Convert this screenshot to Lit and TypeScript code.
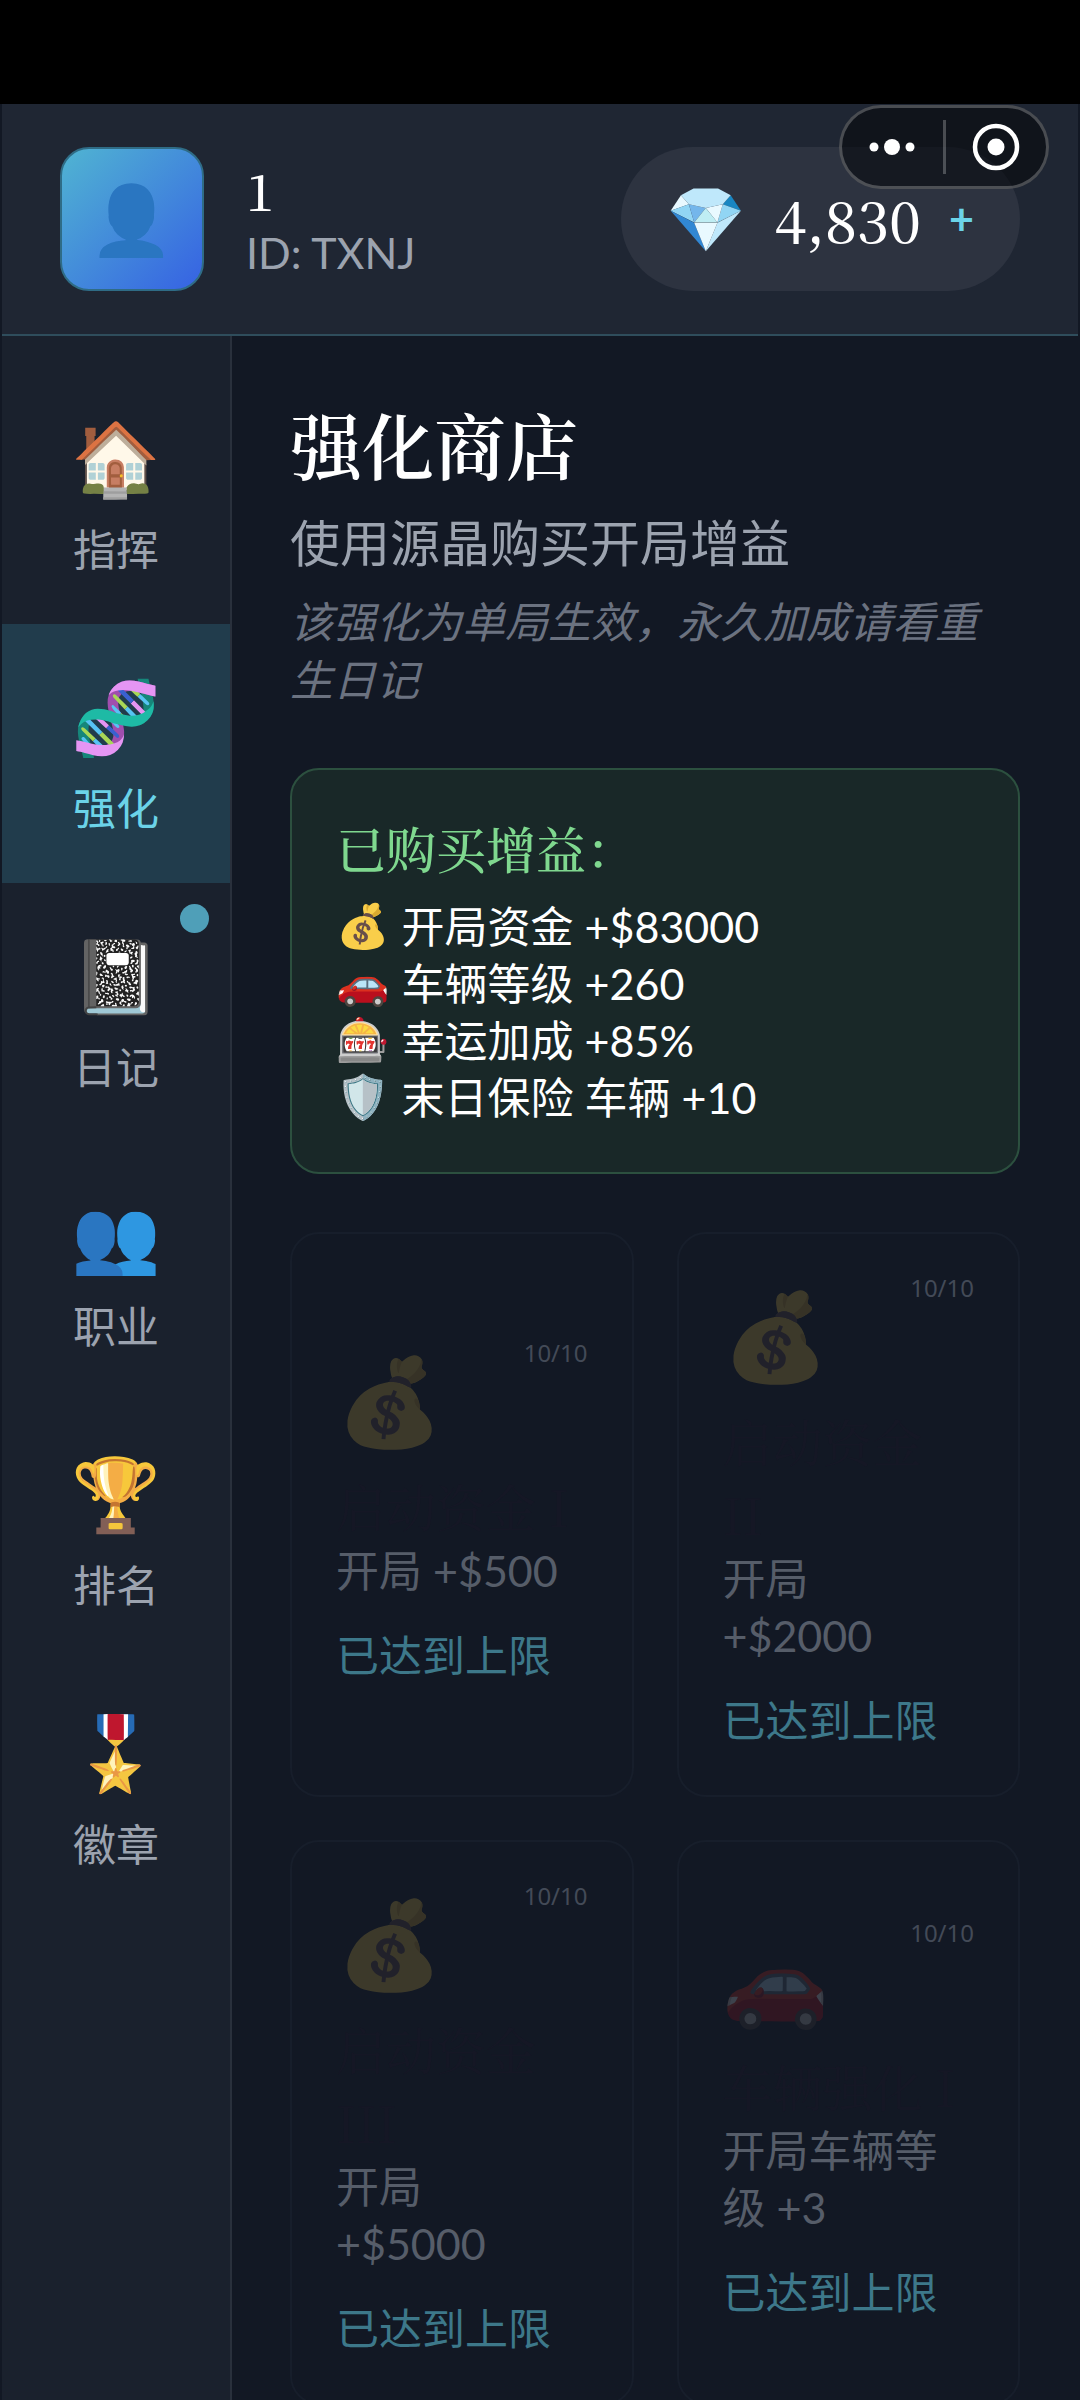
import { LitElement, html, css, nothing } from "lit";
import { customElement, state } from "lit/decorators.js";

interface NavItem {
  id: string;
  icon: string;
  label: string;
  dot?: boolean;
}

interface Upgrade {
  icon: string;
  name: string;
  effect: string;
  count: string;
}

const NAV: NavItem[] = [
  { id: "command", icon: "🏠", label: "指挥" },
  { id: "upgrade", icon: "🧬", label: "强化" },
  { id: "diary", icon: "📓", label: "日记", dot: true },
  { id: "job", icon: "👥", label: "职业" },
  { id: "rank", icon: "🏆", label: "排名" },
  { id: "badge", icon: "🎖️", label: "徽章" },
];

const BUFFS = [
  { icon: "💰", text: "开局资金 +$83000" },
  { icon: "🚗", text: "车辆等级 +260" },
  { icon: "🎰", text: "幸运加成 +85%" },
  { icon: "🛡️", text: "末日保险 车辆 +10" },
];

const UPGRADES: Upgrade[] = [
  { icon: "💰", name: "启动资金 I", effect: "开局 +$500", count: "10/10" },
  { icon: "💰", name: "启动资金 II", effect: "开局 +$2000", count: "10/10" },
  { icon: "💰", name: "启动资金 III", effect: "开局 +$5000", count: "10/10" },
  { icon: "🚗", name: "车辆强化 I", effect: "开局车辆等级 +3", count: "10/10" },
];

@customElement("app-root")
export class AppRoot extends LitElement {
  @state() private active = "upgrade";

  static styles = css`
    :host {
      --sans: Lato, "Noto Sans CJK SC", sans-serif;
      --serif: "Noto Serif CJK SC", "Noto Serif", serif;
      --accent: #6bd3e8;
      display: flex;
      flex-direction: column;
      box-sizing: border-box;
      height: 100vh;
      overflow: hidden;
      background: #121824;
      color: #fff;
      font-family: var(--sans);
      font-size: 43px;
      line-height: 57px;
    }
    * {
      box-sizing: border-box;
    }
    h1, h2, p, ul {
      margin: 0;
      padding: 0;
    }
    button {
      margin: 0;
      padding: 0;
      border: 0;
      background: none;
      color: inherit;
      font: inherit;
      text-align: left;
      cursor: pointer;
    }
    .emoji {
      font-family: "Noto Color Emoji", sans-serif;
      font-style: normal;
      filter: saturate(0.8) brightness(1.02);
    }
    .status-bar {
      flex: none;
      height: 104px;
      background: #000;
    }
    .shell {
      flex: 1;
      min-height: 0;
      display: flex;
      flex-direction: column;
      padding: 0 2px;
    }
    .header {
      position: relative;
      flex: none;
      display: flex;
      align-items: center;
      gap: 42px;
      padding: 43px 58px;
      border-bottom: 2px solid #2f4d5c;
      background: #1f2633;
    }
    .avatar {
      display: flex;
      align-items: center;
      justify-content: center;
      width: 144px;
      height: 144px;
      padding-top: 4px;
      border: 2px solid #2f6c86;
      border-radius: 29px;
      background: linear-gradient(135deg, #50b4d2, #3662e3);
      font-size: 68px;
      line-height: 84px;
    }
    .who {
      flex: 1;
      padding-bottom: 4px;
    }
    .name {
      font-family: var(--serif);
      font-size: 50px;
      font-weight: 500;
      line-height: 70px;
    }
    .uid {
      color: #9ca3af;
    }
    .wallet {
      display: flex;
      align-items: center;
      gap: 28px;
      height: 144px;
      padding: 0 46px;
      border-radius: 72px;
      background: #2d3340;
    }
    .gem {
      padding-top: 4px;
      font-size: 64px;
      line-height: 76px;
    }
    .amount {
      padding-bottom: 2px;
      font-family: var(--serif);
      font-size: 57px;
      font-weight: 500;
      line-height: 84px;
    }
    .plus {
      padding-bottom: 2px;
      color: var(--accent);
      font-weight: 700;
    }
    .capsule {
      position: absolute;
      top: 1px;
      right: 29px;
      display: flex;
      align-items: center;
      width: 210px;
      height: 84px;
      border: 3px solid rgba(255, 255, 255, 0.24);
      border-radius: 42px;
      background: rgba(5, 7, 10, 0.58);
    }
    .capsule button {
      flex: 1;
      display: flex;
      justify-content: center;
    }
    .capsule button + button {
      border-left: 3px solid rgba(255, 255, 255, 0.24);
    }
    .capsule svg {
      display: block;
      width: 54px;
      height: 54px;
    }
    .body {
      flex: 1;
      min-height: 0;
      display: flex;
    }
    .nav {
      flex: none;
      width: 230px;
      padding-top: 29px;
      border-right: 2px solid #29303c;
      background: #1a212d;
    }
    .nav-item {
      position: relative;
      display: flex;
      flex-direction: column;
      align-items: center;
      gap: 14px;
      width: 100%;
      height: 259px;
      padding-top: 48px;
      color: #9ca3af;
    }
    .nav-item.active {
      background: #213c4c;
      color: var(--accent);
    }
    .nav-icon {
      font-size: 72px;
      line-height: 94px;
    }
    .dot {
      position: absolute;
      top: 21px;
      right: 21px;
      width: 29px;
      height: 29px;
      border-radius: 50%;
      background: #4f9fb8;
    }
    .main {
      flex: 1;
      min-width: 0;
      overflow-y: auto;
      scrollbar-width: none;
      padding: 55px 58px;
    }
    .title {
      font-family: var(--serif);
      font-size: 72px;
      font-weight: 600;
      line-height: 104px;
    }
    .subtitle {
      margin-top: 15px;
      color: #9ca3af;
      font-size: 50px;
      line-height: 66px;
    }
    .note {
      margin-top: 17px;
      color: #6b7280;
      font-style: italic;
      line-height: 58px;
    }
    .owned {
      margin-top: 59px;
      padding: 42px 44px 46px;
      border: 2px solid #2c503f;
      border-radius: 29px;
      background: #192828;
    }
    .owned-title {
      margin-bottom: 16px;
      color: #7fd88f;
      font-family: var(--serif);
      font-size: 50px;
      font-weight: 500;
      line-height: 70px;
    }
    .owned ul {
      list-style: none;
    }
    .owned li {
      display: flex;
      gap: 12px;
    }
    .grid {
      display: grid;
      grid-template-columns: 1fr 1fr;
      gap: 43px;
      margin-top: 58px;
    }
    .card {
      display: flex;
      flex-direction: column;
      justify-content: center;
      min-width: 0;
      padding: 46px 44px;
      border: 2px solid #171e2b;
      border-radius: 29px;
    }
    .card-top {
      display: flex;
      justify-content: space-between;
      align-items: flex-start;
      height: 124px;
    }
    .card-icon {
      font-size: 86px;
      line-height: 116px;
      opacity: 0.18;
    }
    .count {
      color: #434a57;
      font-family: "Noto Sans", sans-serif;
      font-size: 24px;
      line-height: 16px;
    }
    .card-name {
      padding-right: 8px;
      color: #151725;
      font-family: var(--serif);
      font-size: 50px;
      line-height: 73px;
    }
    .effect {
      padding-right: 12px;
      color: #565d69;
    }
    .limit {
      margin-top: 28px;
      color: #3d788a;
    }
  `;

  render() {
    return html`
      <div class="status-bar"></div>
      <div class="shell">
        <header class="header">
          <div class="avatar"><span class="emoji">👤</span></div>
          <div class="who">
            <div class="name">1</div>
            <div class="uid">ID: TXNJ</div>
          </div>
          <div class="wallet">
            <span class="gem emoji">💎</span>
            <span class="amount">4,830</span>
            <button class="plus" aria-label="充值">+</button>
          </div>
          <div class="capsule">
            <button aria-label="更多">
              <svg viewBox="0 0 54 54" fill="#fff">
                <circle cx="9" cy="27" r="4.5" />
                <circle cx="27" cy="27" r="8" />
                <circle cx="45" cy="27" r="4.5" />
              </svg>
            </button>
            <button aria-label="关闭">
              <svg viewBox="0 0 54 54">
                <circle cx="27" cy="27" r="21" fill="none" stroke="#fff" stroke-width="4.5" />
                <circle cx="27" cy="27" r="8.5" fill="#fff" />
              </svg>
            </button>
          </div>
        </header>
        <div class="body">
          <nav class="nav">${NAV.map((item) => this.renderNav(item))}</nav>
          <main class="main">
            <h1 class="title">强化商店</h1>
            <p class="subtitle">使用源晶购买开局增益</p>
            <p class="note">该强化为单局生效，永久加成请看重生日记</p>
            <section class="owned">
              <h2 class="owned-title">已购买增益：</h2>
              <ul>
                ${BUFFS.map(
                  (b) => html`<li><span class="emoji">${b.icon}</span><span>${b.text}</span></li>`
                )}
              </ul>
            </section>
            <section class="grid">${UPGRADES.map((u) => this.renderCard(u))}</section>
          </main>
        </div>
      </div>
    `;
  }

  private renderNav(item: NavItem) {
    return html`
      <button
        class="nav-item ${item.id === this.active ? "active" : ""}"
        @click=${() => (this.active = item.id)}
      >
        <span class="nav-icon emoji">${item.icon}</span>
        <span>${item.label}</span>
        ${item.dot ? html`<span class="dot"></span>` : nothing}
      </button>
    `;
  }

  private renderCard(u: Upgrade) {
    return html`
      <button class="card" disabled>
        <span class="card-top">
          <span class="card-icon emoji">${u.icon}</span>
          <span class="count">${u.count}</span>
        </span>
        <span class="card-name">${u.name}</span>
        <span class="effect">${u.effect}</span>
        <span class="limit">已达到上限</span>
      </button>
    `;
  }
}
